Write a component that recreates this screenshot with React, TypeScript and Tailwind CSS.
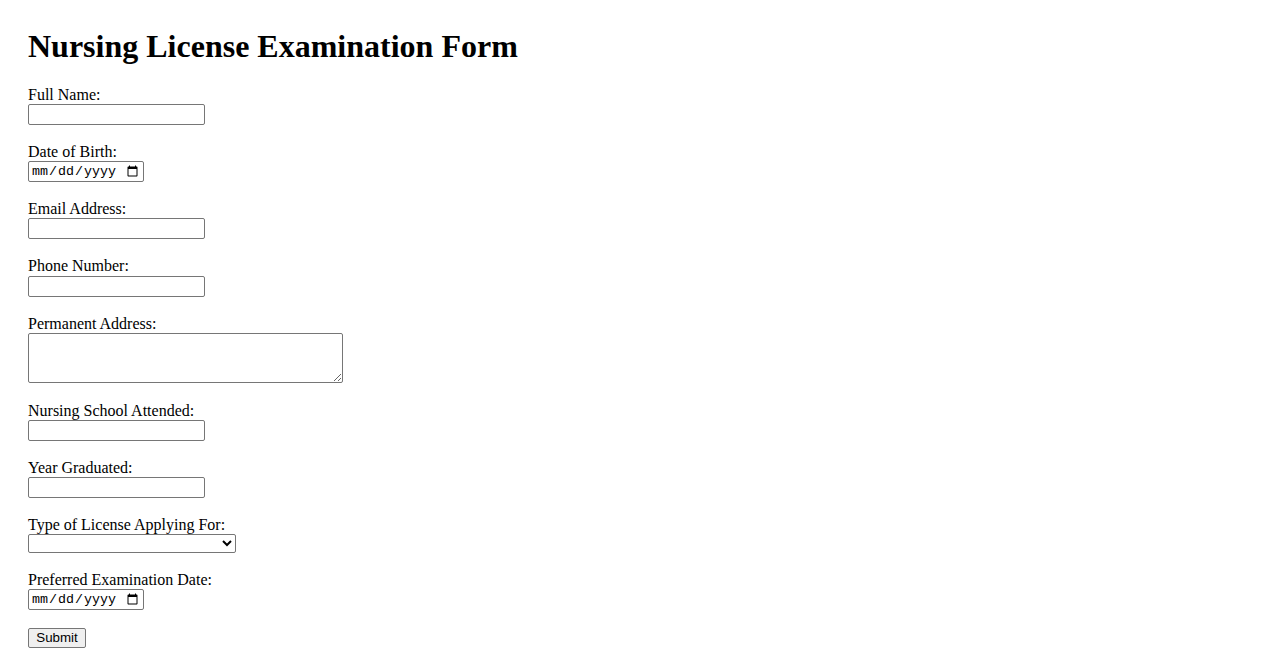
const field = 'block bg-white border border-[#767676] rounded-[2px] px-[2px] py-[1px] text-[13.33px] text-black';
const sans = { fontFamily: '"Liberation Sans", Arial, sans-serif' };

function Label({ children }: { children: React.ReactNode }) {
  return <label className="block leading-[18.2px] h-[18.2px]">{children}</label>;
}

export default function App() {
  return (
    <div className="min-h-screen bg-white text-black text-[16px] font-['Liberation_Serif',serif] p-[28px] pt-[28px]">
      <h1 className="text-[32px] font-bold leading-[36.8px] mb-[21px]">Nursing License Examination Form</h1>
      <form onSubmit={(e) => e.preventDefault()}>
        <Label>Full Name:</Label>
        <input type="text" className={`${field} w-[177px] h-[21px] mb-[18px] font-['Liberation_Sans',Arial,sans-serif]`} />

        <Label>Date of Birth:</Label>
        <input type="date" className={`${field} w-[116px] h-[21px] mb-[18px] font-['Liberation_Mono',monospace]`} />

        <Label>Email Address:</Label>
        <input type="email" className={`${field} w-[177px] h-[21px] mb-[18px] font-['Liberation_Sans',Arial,sans-serif]`} />

        <Label>Phone Number:</Label>
        <input type="tel" className={`${field} w-[177px] h-[21px] mb-[18px] font-['Liberation_Sans',Arial,sans-serif]`} />

        <Label>Permanent Address:</Label>
        <textarea className={`${field} w-[315px] h-[50px] mb-[19px] resize font-['Liberation_Mono',monospace]`} />

        <Label>Nursing School Attended:</Label>
        <input type="text" className={`${field} w-[177px] h-[21px] mb-[18px] font-['Liberation_Sans',Arial,sans-serif]`} />

        <Label>Year Graduated:</Label>
        <input type="number" className={`${field} w-[177px] h-[21px] mb-[18px] font-['Liberation_Sans',Arial,sans-serif]`} />

        <Label>Type of License Applying For:</Label>
        <select className={`${field} w-[208px] h-[19px] mb-[17.5px] px-0 py-0 font-['Liberation_Sans',Arial,sans-serif]`} defaultValue="">
          <option value=""></option>
          <option value="rn">Registered Nurse (RN)</option>
          <option value="lpn">Licensed Practical Nurse (LPN)</option>
        </select>

        <Label>Preferred Examination Date:</Label>
        <input type="date" className={`${field} w-[116px] h-[21px] mb-[18px] font-['Liberation_Mono',monospace]`} />

        <button type="submit" style={sans} className="block w-[58px] h-[20px] bg-[#efefef] border border-[#767676] rounded-[2px] px-[6px] text-[13.33px] leading-none text-black">
          Submit
        </button>
      </form>
    </div>
  );
}
